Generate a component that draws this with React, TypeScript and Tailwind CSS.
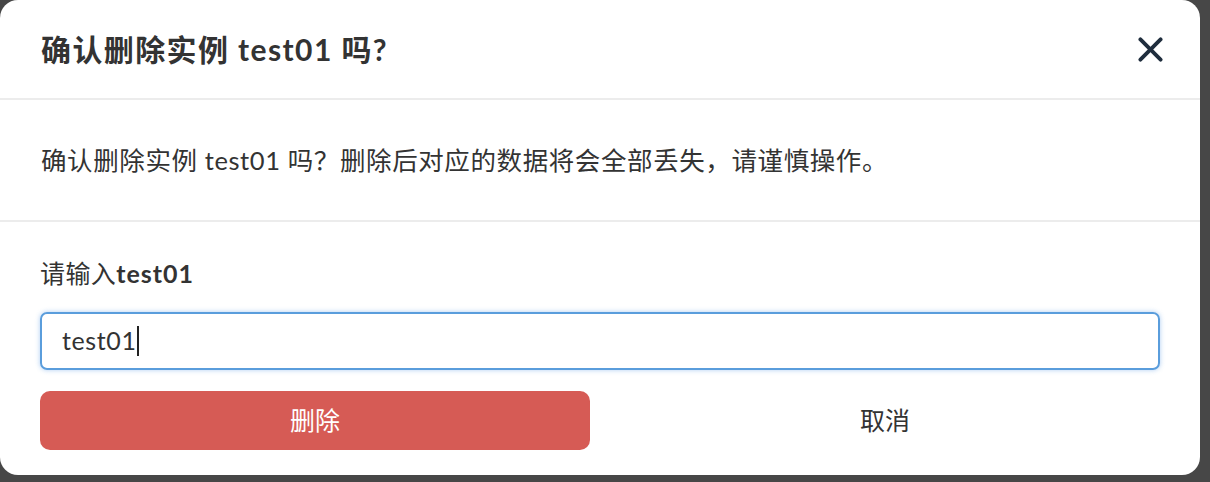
export default function App() {
  const font = "font-['Lato','Noto_Sans_CJK_SC',sans-serif]";
  return (
    <div className={`w-[1210px] h-[482px] bg-[#474747] ${font}`}>
      <div className="w-[1200px] h-[475px] bg-white rounded-[18px] flex flex-col">
        <header className="h-[100px] px-[41px] flex items-center justify-between border-b-2 border-[#ececec]">
          <h1 className="text-[30px] font-bold text-[#333333] tracking-[1.4px]">确认删除实例 test01 吗?</h1>
          <button className="w-[30px] h-[30px] flex items-center justify-center mr-[-6px]">
            <svg width="25" height="25" viewBox="0 0 26 26" fill="none" stroke="#1f2d3d" strokeWidth="4" strokeLinecap="round">
              <path d="M2.5 2.5 23.5 23.5" />
              <path d="M23.5 2.5 2.5 23.5" />
            </svg>
          </button>
        </header>

        <section className="h-[122px] px-[41px] flex items-center border-b-2 border-[#ececec]">
          <p className="text-[25.5px] text-[#333333] tracking-[0.6px]">
            确认删除实例 test01 吗？删除后对应的数据将会全部丢失，请谨慎操作。
          </p>
        </section>

        <section className="px-[40px] pt-[35px] flex flex-col">
          <label className="text-[25px] text-[#333333] leading-[32px] tracking-[0.4px]">
            请输入<span className="font-bold tracking-[1px]">test01</span>
          </label>
          <div className="mt-[23px] h-[58px] rounded-[7px] border-2 border-[#5a9ddc] shadow-[0_0_5px_rgba(74,144,226,0.45)] flex items-center pl-[20px]">
            <span className="text-[25px] text-[#333333] tracking-[0.6px]">test01</span>
            <span className="w-[2px] h-[30px] bg-[#222222]" />
          </div>
          <div className="mt-[21px] grid grid-cols-2 gap-[20px]">
            <button className="h-[59px] rounded-[10px] bg-[#d65b55] text-white text-[25px]">删除</button>
            <button className="h-[59px] rounded-[10px] bg-white text-[#333333] text-[25px]">取消</button>
          </div>
        </section>
      </div>
    </div>
  );
}
